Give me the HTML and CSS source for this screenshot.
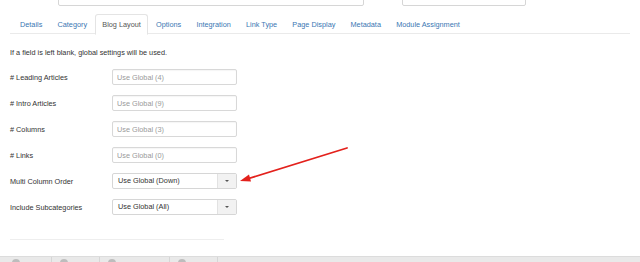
FILE: index.html
```html
<!DOCTYPE html>
<html lang="en">
<head>
    <meta charset="UTF-8">
    <title>Edit Menu Item</title>
    <link rel="stylesheet" href="styles.css">
</head>
<body>
    <div class="top-fields">
        <div class="top-input top-input-wide"></div>
        <div class="top-input top-input-small"></div>
    </div>

    <ul class="tabs">
        <li><a href="#">Details</a></li>
        <li><a href="#">Category</a></li>
        <li class="active"><a href="#">Blog Layout</a></li>
        <li><a href="#">Options</a></li>
        <li><a href="#">Integration</a></li>
        <li><a href="#">Link Type</a></li>
        <li><a href="#">Page Display</a></li>
        <li><a href="#">Metadata</a></li>
        <li><a href="#">Module Assignment</a></li>
    </ul>

    <section class="panel">
        <p class="hint">If a field is left blank, global settings will be used.</p>

        <div class="row">
            <label for="leading">#&nbsp;Leading Articles</label>
            <input type="text" id="leading" placeholder="Use Global (4)">
        </div>
        <div class="row">
            <label for="intro">#&nbsp;Intro Articles</label>
            <input type="text" id="intro" placeholder="Use Global (9)">
        </div>
        <div class="row">
            <label for="columns">#&nbsp;Columns</label>
            <input type="text" id="columns" placeholder="Use Global (3)">
        </div>
        <div class="row">
            <label for="links">#&nbsp;Links</label>
            <input type="text" id="links" placeholder="Use Global (0)">
        </div>
        <div class="row">
            <label>Multi Column Order</label>
            <div class="select">
                <span class="select-value">Use Global (Down)</span>
                <span class="select-btn"><i class="caret"></i></span>
            </div>
        </div>
        <div class="row">
            <label>Include Subcategories</label>
            <div class="select">
                <span class="select-value">Use Global (All)</span>
                <span class="select-btn"><i class="caret"></i></span>
            </div>
        </div>

        <hr class="divider">
    </section>

    <div class="status-bar">
        <span class="seg"><i class="dot"></i></span>
        <span class="seg"><i class="dot"></i></span>
        <span class="seg seg-wide"><i class="dot"></i></span>
        <span class="seg"><i class="dot"></i></span>
    </div>

    <!-- annotation arrow drawn on top of the form -->
    <svg class="arrow" width="640" height="262" viewBox="0 0 640 262">
        <line x1="347" y1="148" x2="247" y2="179" stroke="#e3211c" stroke-width="1.8" stroke-linecap="round"/>
        <polygon points="240,181 249,174.5 251,181.5" fill="#e3211c"/>
    </svg>
</body>
</html>
```

FILE: styles.css
```css
*{
    box-sizing: border-box;
}

body{
    margin: 0;
    width: 640px;
    height: 262px;
    overflow: hidden;
    position: relative;
    background-color: #fff;
    font-family: "Liberation Sans", Arial, sans-serif;
    font-size: 7.3px;
    color: #333;
}

/* half hidden fields above the tabs */
.top-fields{
    display: flex;
    height: 6px;
    overflow: hidden;
    padding-left: 58px;
    margin-bottom: 8px;
}

.top-input{
    flex-shrink: 0;
    height: 18px;
    margin-top: -12px;
    border: 1px solid #d6d6d6;
    border-radius: 2px;
}

.top-input-wide{
    width: 306px;
    margin-right: 38px;
}

.top-input-small{
    width: 124px;
}

.tabs{
    list-style: none;
    display: flex;
    margin: 0 10px;
    padding: 0 0 0 9px;
    border-bottom: 1px solid #eaeaea;
    height: 20px;
}

.tabs a{
    display: block;
    height: 20px;
    line-height: 19px;
    padding: 0 6.6px;
    color: #3a77b3;
    text-decoration: none;
    border: 1px solid transparent;
    border-radius: 3px 3px 0 0;
}

.tabs li:first-child a{
    padding-left: 0;
}

.tabs .active a{
    color: #555;
    background-color: #fff;
    border-color: #e4e4e4 #e4e4e4 #fff;
    height: 21px;
}

.panel{
    padding: 0 10px;
}

.hint{
    margin: 14px 0 6px 0;
    line-height: 10px;
}

.row{
    display: flex;
    align-items: center;
    height: 26px;
}

.row label{
    width: 102px;
    color: #333;
}

input[type = "text"]{
    width: 125px;
    height: 16px;
    padding: 0 4px;
    border: 1px solid #d8d8d8;
    border-radius: 2px;
    font-family: inherit;
    font-size: 7.3px;
    color: #555;
    box-shadow: inset 0 1px 1px rgba(0,0,0,0.04);
}

input::placeholder{
    color: #9a9a9a;
}

.select{
    display: flex;
    width: 125px;
    height: 16px;
    border: 1px solid #d6d6d6;
    border-radius: 2px;
    background-color: #fff;
}

.select-value{
    flex: 1;
    line-height: 14px;
    padding-left: 5px;
    color: #333;
}

.select-btn{
    width: 19px;
    display: flex;
    align-items: center;
    justify-content: center;
    background-color: #f2f2f2;
    border-left: 1px solid #e2e2e2;
}

.caret{
    width: 0;
    height: 0;
    border-left: 2px solid transparent;
    border-right: 2px solid transparent;
    border-top: 2px solid #555;
}

.divider{
    width: 214px;
    margin: 19px 0 0 0;
    border: 0;
    border-top: 1px solid #eee;
}

.status-bar{
    position: absolute;
    left: 0;
    right: 0;
    top: 256px;
    height: 6px;
    display: flex;
    background-color: #e9e9e9;
    border-top: 1px solid #dcdcdc;
    padding-left: 4px;
}

.seg{
    width: 48px;
    border-right: 1px solid #d6d6d6;
    padding-left: 8px;
}

.seg-wide{
    width: 70px;
}

.dot{
    display: block;
    width: 8px;
    height: 8px;
    margin-top: 2px;
    border-radius: 50%;
    background-color: #bdbdbd;
}

.arrow{
    position: absolute;
    left: 0;
    top: 0;
    pointer-events: none;
}
```
